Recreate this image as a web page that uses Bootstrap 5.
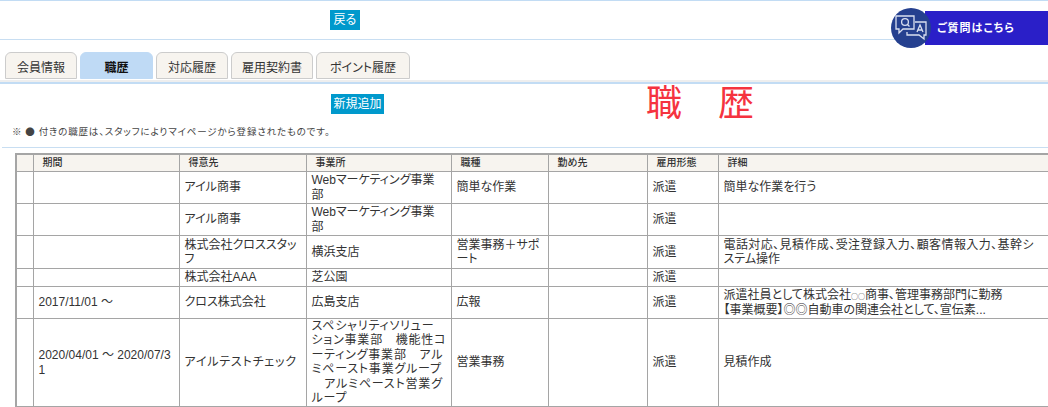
<!DOCTYPE html>
<html lang="ja">
<head>
<meta charset="utf-8">
<title>職歴</title>
<link href="https://cdn.jsdelivr.net/npm/bootstrap@5.3.0/dist/css/bootstrap.min.css" rel="stylesheet">
<style>
html,body{height:407px;overflow:hidden;}
body{position:relative;background:#fff;color:#333;font-family:"Liberation Sans","Noto Sans CJK JP",sans-serif;font-size:12px;font-feature-settings:"palt";}
.top-area{height:40px;border-top:1px solid #c2dcf4;border-bottom:1px solid #c8def2;padding:9px 0 0 330px;}
.act-btn{display:block;background:#0099cc;color:#fff;border:0;border-radius:0;font-size:12px;line-height:21px;height:20px;padding:0;text-align:center;}
.act-btn:hover{background:#0099cc;color:#fff;}
.bw-back{width:30px}.bw-new{width:53px}
.tab-area{height:44px;padding:12px 0 0 5px;border-bottom:2px solid #c2dcf4;box-shadow:inset 0 -2px 0 #eee;}
.tab-area .nav-link{height:27px;margin-right:3px;padding:0;text-align:center;font-size:12px;line-height:30px;color:#333;background:#f7f4ef;border:1px solid #ccc;border-bottom-color:#ccc;border-radius:6px 6px 0 0;}
.tab-area .nav-link.active{background:#bfdaf5;border-color:#bfdaf5;color:#111;font-weight:700;}
.tw1{width:72px}.tw2{width:73px}.tw3{width:72px}.tw4{width:82px}.tw5{width:94px}
.head-area{height:64px;border-bottom:1px solid #c8def2;margin-left:2px;}
.head-left{width:644px;padding:10px 0 0 329px;}
.note-text{font-family:"Noto Sans CJK JP",sans-serif;font-size:9.5px;line-height:12px;color:#444;margin:11px 0 0 -319px;white-space:nowrap;letter-spacing:.85px;}
.page-title{font-size:36px;line-height:40px;color:#f5333f;margin:0;font-weight:400;white-space:nowrap;}
.hist-wrap{padding:5px 0 0 15px;width:1100px;}
.table.hist-table{width:1085px;table-layout:fixed;margin:0;border-collapse:collapse;border:1px solid #a5a5a5;border-top-width:2px;}
.table.hist-table>*>*>*{border:1px solid #a5a5a5;padding:1px 5px 0;font-size:12px;line-height:14.5px;vertical-align:middle;color:#333;word-break:break-all;background:transparent;box-shadow:none;}
.table.hist-table>thead>tr>th{background:#f7f4ef;font-size:10px;font-weight:500;line-height:12px;height:17px;padding-left:9px;color:#333;}
.table.hist-table>*>*>.mark-col{padding:0;border-left-width:2px;}
.table.hist-table>*>*>.tall-cell{padding-top:0;}
.h32{height:32px}.h33{height:33px}.h18{height:18px}.h88{height:88px}
.wide-line{letter-spacing:.42px;white-space:nowrap;}
.wide-kana{letter-spacing:.8px;white-space:nowrap;}
.tiny-o{font-family:"Noto Sans CJK JP",sans-serif;font-size:7px;}
.help-tab{position:absolute;top:8px;left:891px;width:157px;height:40px;}
.help-bar{position:absolute;left:34px;top:3px;right:0;height:34px;background:#2a1fc8;color:#fff;font-size:11px;font-weight:700;line-height:35px;padding-left:12px;letter-spacing:1px;}
.help-disc{position:absolute;left:0;top:0;width:40px;height:40px;border-radius:50%;background:#25408f;display:flex;align-items:center;justify-content:center;}
</style>
</head>
<body>
<div class="top-area"><a class="btn act-btn d-inline-block bw-back" href="#">戻る</a></div>
<div class="help-tab">
  <div class="help-bar">ご質問はこちら</div>
  <div class="help-disc">
    <svg width="36" height="30" viewBox="0 0 36 30" fill="none" stroke="#d9dff0" stroke-width="1.3">
      <path d="M3 3h18v13H10l-4 4v-4H3z"/>
      <circle cx="12" cy="9" r="3.4"/>
      <path d="M14.5 11.5l2 2"/>
      <path d="M22 9h11v13h-2v4l-5-4H14v-3"/>
      <path d="M24 19l3-7 3 7M25 17h4"/>
    </svg>
  </div>
</div>
<ul class="nav tab-area">
  <li class="nav-item"><a class="nav-link tw1" href="#">会員情報</a></li>
  <li class="nav-item"><a class="nav-link active tw2" href="#">職歴</a></li>
  <li class="nav-item"><a class="nav-link tw3" href="#">対応履歴</a></li>
  <li class="nav-item"><a class="nav-link tw4" href="#">雇用契約書</a></li>
  <li class="nav-item"><a class="nav-link tw5" href="#">ポイント履歴</a></li>
</ul>
<div class="head-area d-flex">
  <div class="head-left">
    <a class="btn act-btn d-inline-block bw-new" href="#">新規追加</a>
    <p class="note-text">※ ● 付きの職歴は、スタッフによりマイページから登録されたものです。</p>
  </div>
  <h1 class="page-title">職　歴</h1>
</div>
<div class="hist-wrap">
<table class="table hist-table">
  <colgroup><col style="width:17px"><col style="width:146px"><col style="width:127px"><col style="width:145px"><col style="width:97px"><col style="width:99px"><col style="width:71px"><col></colgroup>
  <thead><tr><th class="mark-col"></th><th>期間</th><th>得意先</th><th>事業所</th><th>職種</th><th>勤め先</th><th>雇用形態</th><th>詳細</th></tr></thead>
  <tbody>
    <tr class="h32"><td class="mark-col"></td><td></td><td>アイル商事</td><td>Webマーケティング事業部</td><td>簡単な作業</td><td></td><td>派遣</td><td>簡単な作業を行う</td></tr>
    <tr class="h32"><td class="mark-col"></td><td></td><td>アイル商事</td><td>Webマーケティング事業部</td><td></td><td></td><td>派遣</td><td></td></tr>
    <tr class="h33"><td class="mark-col"></td><td></td><td>株式会社クロススタッ<br>フ</td><td>横浜支店</td><td>営業事務＋サポ<br>ート</td><td></td><td>派遣</td><td><span class="wide-line">電話対応、見積作成、受注登録入力、顧客情報入力、基幹シ</span><br>ステム操作</td></tr>
    <tr class="h18"><td class="mark-col"></td><td></td><td>株式会社AAA</td><td>芝公園</td><td></td><td></td><td>派遣</td><td></td></tr>
    <tr class="h32"><td class="mark-col"></td><td>2017/11/01 ～</td><td>クロス株式会社</td><td>広島支店</td><td>広報</td><td></td><td>派遣</td><td>派遣社員として株式会社<span class="tiny-o">○○</span>商事、管理事務部門に勤務<br>【事業概要】◎◎自動車の関連会社として、宣伝素...</td></tr>
    <tr class="h88"><td class="mark-col"></td><td>2020/04/01 ～ 2020/07/31</td><td><span class="wide-kana">アイルテストチェック</span></td><td class="tall-cell"><span class="wide-kana">スペシャリティソリュー<br>ション事業部　機能性コ<br>ーティング事業部　アル<br>ミペースト事業グループ<br>　アルミペースト営業グ<br>ループ</span></td><td>営業事務</td><td></td><td>派遣</td><td>見積作成</td></tr>
  </tbody>
</table>
</div>
<script src="https://cdn.jsdelivr.net/npm/bootstrap@5.3.0/dist/js/bootstrap.bundle.min.js"></script>
</body>
</html>
